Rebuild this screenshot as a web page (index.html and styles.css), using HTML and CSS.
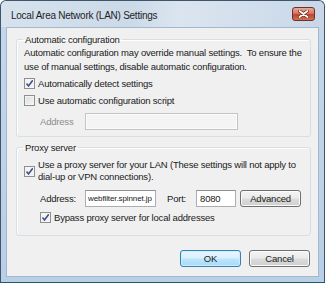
FILE: index.html
```html
<!DOCTYPE html>
<html lang="en">

<head>
    <meta charset="UTF-8">
    <title>Local Area Network (LAN) Settings</title>
    <link rel="stylesheet" href="styles.css">
</head>

<body>

    <div class="window">
        <!-- Title bar -->
        <div class="titlebar">
            <span class="title">Local Area Network (LAN) Settings</span>
            <div class="close-btn">
                <svg width="11" height="8" viewBox="0 0 11 8">
                    <path d="M1.5 1 L9.5 7 M9.5 1 L1.5 7" stroke="#5a2018" stroke-width="3.2" stroke-linecap="round"/>
                    <path d="M1.5 1 L9.5 7 M9.5 1 L1.5 7" stroke="#ffffff" stroke-width="1.8" stroke-linecap="round"/>
                </svg>
            </div>
        </div>

        <!-- Dialog content -->
        <div class="content">
            <fieldset class="group">
                <legend>Automatic configuration</legend>
                <p class="note">Automatic configuration may override manual settings.&nbsp; To ensure the<br>use of manual settings, disable automatic configuration.</p>

                <label class="check-row">
                    <span class="checkbox checked"></span>
                    <span>Automatically detect settings</span>
                </label>
                <label class="check-row">
                    <span class="checkbox"></span>
                    <span>Use automatic configuration script</span>
                </label>

                <div class="field-row indent">
                    <span class="label disabled">Address</span>
                    <span class="input input-wide disabled-input"></span>
                </div>
            </fieldset>

            <fieldset class="group group-proxy">
                <legend>Proxy server</legend>
                <label class="check-row multi">
                    <span class="checkbox checked"></span>
                    <span>Use a proxy server for your LAN (These settings will not apply to<br>dial-up or VPN connections).</span>
                </label>

                <div class="field-row indent proxy-row">
                    <span class="label">Address:</span>
                    <span class="input input-address">webfilter.spinnet.jp</span>
                    <span class="label port-label">Port:</span>
                    <span class="input input-port">8080</span>
                    <span class="btn btn-advanced">Advanced</span>
                </div>

                <label class="check-row indent bypass">
                    <span class="checkbox checked"></span>
                    <span>Bypass proxy server for local addresses</span>
                </label>
            </fieldset>

            <!-- Buttons -->
            <div class="actions">
                <span class="btn btn-default">OK</span>
                <span class="btn">Cancel</span>
            </div>
        </div>
    </div>

</body>

</html>
```

FILE: styles.css
```css
body {
    margin: 0;
    padding: 0;
    font-family: 'Liberation Sans', Arial, sans-serif;
    font-size: 9.5px;
    letter-spacing: -0.2px;
    color: #1a1a1a;
    background-color: #ffffff;
}

.window {
    width: 323px;
    height: 281px;
    border: 1px solid #3f5569;
    border-bottom-color: #1d5a66;
    border-radius: 6px 6px 0 0;
    background: linear-gradient(to bottom, #d3e0ee 0%, #c4d6ea 10%, #b9cfe7 100%);
    display: flex;
    flex-direction: column;
}

.titlebar {
    height: 26px;
    display: flex;
    align-items: center;
    justify-content: space-between;
    padding: 0 9px 0 10px;
    background: linear-gradient(100deg, #d7e2ee 0%, #cbd9e8 40%, #dbe5ef 55%, #c8d7e8 100%);
    border-radius: 6px 6px 0 0;
}

.title {
    font-size: 10px;
    letter-spacing: -0.25px;
    color: #1e1e1e;
    margin-top: 2px;
}

.close-btn {
    width: 21px;
    height: 12px;
    margin-top: -1px;
    border: 1px solid #6e3029;
    border-radius: 3px;
    background: linear-gradient(to bottom, #e9aa9a 0%, #d77460 45%, #c2432a 55%, #d0704f 100%);
    display: flex;
    align-items: center;
    justify-content: center;
}

.content {
    flex: 1;
    margin: 0 5px 5px 5px;
    border: 1px solid #a4b8cd;
    background-color: #f0f0f0;
    padding: 5px 7px 0 9px;
}

.group {
    margin: 0;
    padding: 0 7px 6px 7px;
    border: 1px solid #d5dfe5;
    border-radius: 3px;
    box-shadow: inset 1px 1px 0 #ffffff;
}

.group legend {
    padding: 0 2px;
    margin-left: -1px;
    line-height: 13px;
}

.group-proxy {
    margin-top: 4px;
    padding-bottom: 9px;
}

.note {
    margin: 0 0 1px 0;
    line-height: 14px;
    white-space: nowrap;
}

.check-row {
    display: flex;
    align-items: center;
    gap: 3px;
    height: 17px;
    white-space: nowrap;
}

.check-row.multi {
    height: auto;
    margin-top: 5px;
    line-height: 12px;
}

.check-row.bypass {
    margin-top: 2px;
}

.checkbox {
    flex: none;
    width: 9px;
    height: 9px;
    border: 1px solid #8e8f8f;
    background: linear-gradient(135deg, #dcdcdc 0%, #f6f6f6 100%);
    box-shadow: inset 0 0 0 1px #f4f4f4;
}

.checkbox.checked {
    background-color: #f4f4f4;
    background-image: url("data:image/svg+xml,%3Csvg xmlns='http://www.w3.org/2000/svg' width='9' height='9' viewBox='0 0 9 9'%3E%3Cpath d='M1.5 4.5 L3.5 7 L7.8 1.2' fill='none' stroke='%23404f8c' stroke-width='1.6'/%3E%3C/svg%3E");
}

.indent {
    padding-left: 16px;
}

.field-row {
    display: flex;
    align-items: center;
    height: 17px;
    margin-top: 4px;
}

.proxy-row {
    margin-top: 7px;
}

.label {
    width: 45px;
    flex: none;
}

.disabled {
    color: #8d8d8d;
}

.input {
    box-sizing: border-box;
    height: 17px;
    border: 1px solid #abadb3;
    border-top-color: #8e9095;
    background-color: #ffffff;
    display: flex;
    align-items: center;
    padding-left: 2px;
}

.input-wide {
    width: 153px;
}

.disabled-input {
    border-color: #c4c4c4;
    background-color: #f4f4f4;
    box-shadow: inset 0 0 0 1px #fbfbfb;
}

.input-address {
    width: 71px;
    font-size: 8px;
    letter-spacing: -0.1px;
}

.port-label {
    width: auto;
    margin-left: 11px;
    margin-right: 10px;
}

.input-port {
    width: 40px;
    padding-left: 3px;
}

.btn {
    box-sizing: border-box;
    width: 61px;
    height: 17px;
    border: 1px solid #707070;
    border-radius: 3px;
    background: linear-gradient(to bottom, #f3f3f3 0%, #ebebeb 48%, #dcdcdc 52%, #cfcfcf 100%);
    box-shadow: inset 0 0 0 1px #fbfbfb;
    display: flex;
    align-items: center;
    justify-content: center;
}

.btn-advanced {
    margin-left: 4px;
}

.btn-default {
    border-color: #3c7fb1;
    background: linear-gradient(to bottom, #eaf6fd 0%, #d9f0fc 48%, #bee6fd 52%, #a7d9f5 100%);
    box-shadow: inset 0 0 0 1px #c4f0ff;
}

.actions {
    display: flex;
    justify-content: flex-end;
    gap: 8px;
    margin-top: 14px;
    padding-right: 1px;
}
```
